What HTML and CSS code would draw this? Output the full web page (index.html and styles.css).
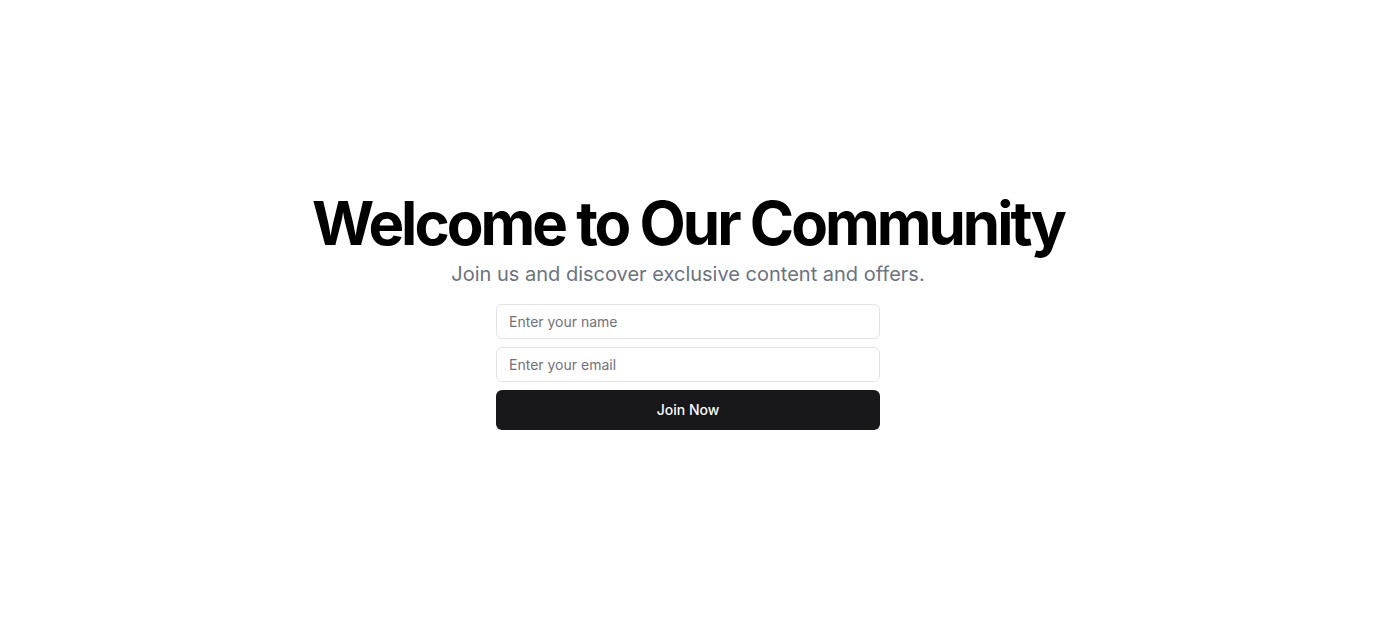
FILE: index.html
```html
<!DOCTYPE html>
<html lang="en">
<head>
  <meta charset="UTF-8">
  <meta name="viewport" content="width=device-width, initial-scale=1.0">
  <title>Welcome to Our Community</title>
  <link rel="stylesheet" href="styles.css">
</head>
<body>
  <main class="hero">
    <div class="intro">
      <h1>Welcome to Our Community</h1>
      <p>Join us and discover exclusive content and offers.</p>
    </div>
    <form class="signup" id="signup-form">
      <input type="text" name="name" placeholder="Enter your name">
      <input type="email" name="email" placeholder="Enter your email">
      <button type="submit">Join Now</button>
    </form>
  </main>
</body>
</html>
```

FILE: styles.css
```css
* {
  box-sizing: border-box;
}

body {
  margin: 0;
  font-family: 'Inter', 'Noto Sans', sans-serif;
  background: #fff;
  color: #09090b;
}

.hero {
  min-height: 100vh;
  display: flex;
  flex-direction: column;
  align-items: center;
  justify-content: center;
  gap: 16px;
  text-align: center;
}

.intro {
  display: flex;
  flex-direction: column;
  gap: 7px;
}

h1 {
  margin: 0;
  font-size: 60px;
  line-height: 1;
  font-weight: 700;
  letter-spacing: -0.05em;
  color: #000;
}

.intro p {
  margin: 0;
  font-size: 20px;
  line-height: 28px;
  color: #6b7280;
}

.signup {
  width: 384px;
  display: flex;
  flex-direction: column;
  gap: 8px;
}

input {
  height: 35px;
  padding: 0 12px;
  border: 1px solid #e4e4e7;
  border-radius: 6px;
  font-family: inherit;
  font-size: 14px;
  color: #09090b;
  background: #fff;
}

input::placeholder {
  color: #71717a;
}

button {
  height: 40px;
  border: none;
  border-radius: 6px;
  background: #18181b;
  color: #fafafa;
  font-family: inherit;
  font-size: 14px;
  font-weight: 500;
  cursor: pointer;
}
```
